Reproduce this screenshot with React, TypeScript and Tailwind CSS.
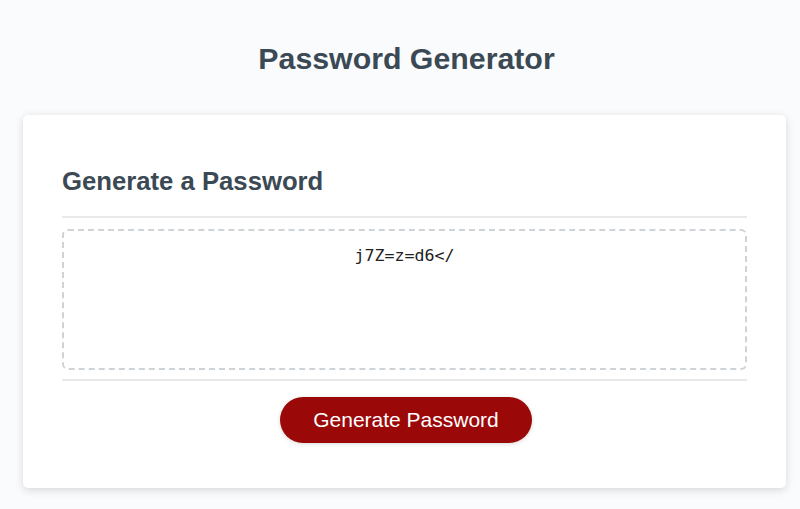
import { useState } from 'react';

const CHARS = 'abcdefghijklmnopqrstuvwxyzABCDEFGHIJKLMNOPQRSTUVWXYZ0123456789!@#$%^&*()=<>/?';

export default function App() {
  const [password, setPassword] = useState('j7Z=z=d6</');

  const generate = () => {
    let out = '';
    for (let i = 0; i < 10; i++) out += CHARS[Math.floor(Math.random() * CHARS.length)];
    setPassword(out);
  };

  return (
    <div className="min-h-screen bg-[#f9fbfd] pl-[23px] pr-[14px] pt-[41px] font-['Liberation_Sans',Arial,sans-serif] text-[#3b4954]">
      <header className="text-center">
        <h1 className="ml-[4px] text-[30.3px] font-bold leading-[35px]">Password Generator</h1>
      </header>

      <div className="mt-[39px] rounded-[5px] bg-white px-[39px] pt-[51px] pb-[45px] shadow-[0_2px_8px_rgba(0,0,0,0.15)]">
        <div>
          <h2 className="text-[25.7px] font-bold leading-[30px]">Generate a Password</h2>
          <div className="mt-[20px] h-[2px] bg-[#e7e9eb]" />
        </div>

        <div className="mt-[11px]">
          <textarea
            readOnly
            value={password}
            aria-label="Generated Password"
            className="block h-[141px] w-full resize-none overflow-hidden rounded-[6px] border-2 border-dashed border-[#ced3d8] px-[15px] pt-[15px] text-center font-['DejaVu_Sans_Mono',monospace] text-[16.6px] leading-[20px] text-[#222] outline-none"
          />
        </div>

        <div className="mt-[9px] h-[2px] bg-[#e7e9eb]" />

        <div className="mt-[16px] flex justify-center">
          <button
            onClick={generate}
            className="ml-[3px] h-[46px] rounded-full bg-[#9b0808] px-[33px] text-[21px] leading-[22px] text-white shadow-[0_1px_4px_rgba(0,0,0,0.15)]"
          >
            Generate Password
          </button>
        </div>
      </div>
    </div>
  );
}
